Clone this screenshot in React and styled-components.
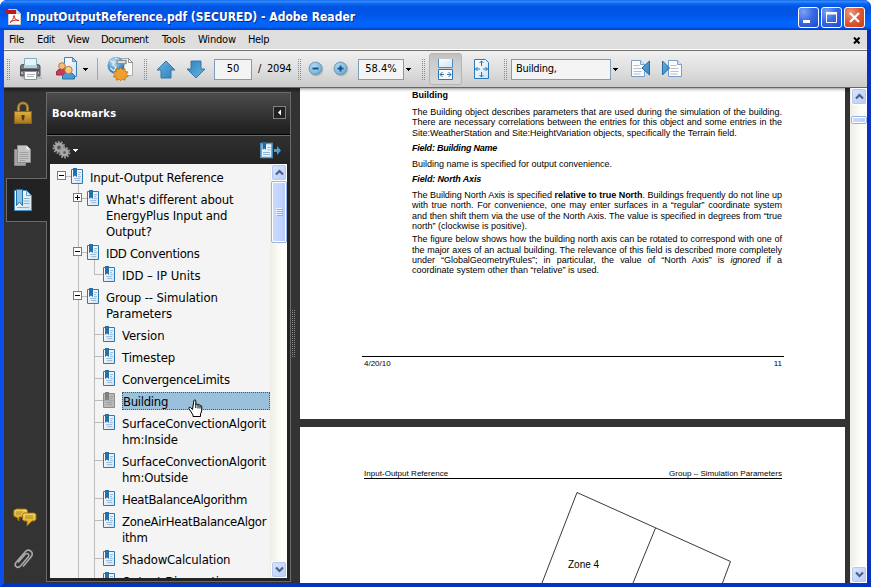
import React from "react";
import styled, { createGlobalStyle, css } from "styled-components";

const UI = '"DejaVu Sans Condensed", "DejaVu Sans", sans-serif';

const GlobalStyle = createGlobalStyle`
  * { box-sizing: border-box; }
  body { margin: 0; background: #fff; overflow: hidden; }
  svg { display: block; flex: none; }
`;

/* ---------- window frame ---------- */
const Window = styled.div`
  width: 871px;
  height: 587px;
  display: flex;
  flex-direction: column;
  overflow: hidden;
  border-radius: 7px 7px 0 0;
  background: #0831d9;
  font-family: ${UI};
  font-stretch: condensed;
  color: #000;
`;
const TitleBar = styled.header`
  height: 30px;
  flex: none;
  display: flex;
  align-items: center;
  padding: 4px 6px 0 6px;
  background: linear-gradient(#0058e0 0, #3a8cff 1px, #2a83f8 2px, #0763ee 4px, #0054e3 7px, #0055e5 15px, #0060f8 20px, #0066ff 25px, #0060f4 27px, #0046d0 29px, #0040c4 30px);
`;
const Title = styled.h1`
  margin: 0 auto 0 4px;
  font: bold 12px/16px "DejaVu Sans Condensed", "DejaVu Sans", sans-serif;
  font-stretch: condensed;
  letter-spacing: 0.01px;
  color: #fff;
  text-shadow: 1px 1px 0 #0a2a8c;
  white-space: pre;
`;
const WindowButton = styled.button`
  width: 21px;
  height: 21px;
  margin-left: 2px;
  padding: 0;
  border: 1px solid #fff;
  border-radius: 3px;
  background: ${(p) =>
    p.$close
      ? "radial-gradient(circle at 30% 25%, #ee9a7c 0, #e25a34 45%, #c83c14 100%)"
      : "radial-gradient(circle at 25% 20%, #7ba2f4 0, #3a6be6 45%, #1c48cc 100%)"};
`;
const Frame = styled.div`
  flex: 1;
  min-height: 0;
  display: flex;
  flex-direction: column;
  border: solid;
  border-width: 0 4px 4px;
  border-color: #0a48e0 #0831c0 #0434c4 #0a50e8;
  background: #333;
`;
const MenuBar = styled.nav`
  height: 21px;
  flex: none;
  display: flex;
  align-items: center;
  padding: 0 6px 0 5px;
  background: #dedede;
  border-bottom: 1px solid #707070;
  box-shadow: inset 0 -1px #fff;
`;
const MenuItem = styled.span`
  width: ${(p) => p.$w}px;
  font-size: 11px;
  line-height: 14px;
  letter-spacing: ${(p) => p.$ls}px;
  white-space: nowrap;
`;
const CloseDoc = styled.span`
  margin-left: auto;
`;

/* ---------- toolbar ---------- */
const ToolBar = styled.div`
  height: 37px;
  flex: none;
  display: flex;
  align-items: center;
  padding-left: 3px;
  background: linear-gradient(#f0f0f0, #dcdcdc 60%, #cacaca);
  border-bottom: 1px solid #666;
`;
const Tool = styled.span`
  width: ${(p) => p.$w}px;
  margin-left: ${(p) => p.$gap}px;
  flex: none;
  display: flex;
  justify-content: center;
`;
const Grip = styled.span`
  width: 4px;
  height: 21px;
  flex: none;
  margin-left: ${(p) => p.$gap || 0}px;
  background: radial-gradient(circle at 0.5px 0.5px, #8c8c8c 0.7px, transparent 0.8px) 0 0 / 2px 2px;
`;
const Divider = styled.span`
  width: 1px;
  height: 22px;
  margin-left: 9px;
  background: #aaa69a;
`;
const Field = styled.span`
  width: ${(p) => p.$w}px;
  height: 21px;
  flex: none;
  margin-left: ${(p) => p.$gap}px;
  padding: 0 ${(p) => p.$pad || 0}px;
  border: 1px solid #7f9db9;
  background: #f4f4f4;
  font-size: 11px;
  line-height: 18px;
  letter-spacing: ${(p) => p.$ls || 0}px;
  text-align: ${(p) => p.$align || "center"};
`;
const PageTotal = styled.span`
  width: 34px;
  margin-left: 6px;
  font-size: 11px;
  line-height: 18px;
  letter-spacing: -0.2px;
  white-space: pre;
`;
const PressedTool = styled.button`
  width: 33px;
  height: 32px;
  flex: none;
  margin-left: 3px;
  padding: 1px 0 0;
  display: flex;
  align-items: center;
  justify-content: center;
  border: 1px solid #b4b4b4;
  border-radius: 3px;
  background: linear-gradient(#c0c0c0, #cdcdcd 30%, #d8d8d8);
`;

/* ---------- navigation strip ---------- */
const Workspace = styled.div`
  flex: 1;
  min-height: 0;
  display: flex;
  background: linear-gradient(#1e1e1e, #333 5px);
`;
const Strip = styled.aside`
  width: 42px;
  flex: none;
  display: flex;
  flex-direction: column;
  z-index: 1;
`;
const StripButton = styled.button`
  height: ${(p) => p.$h}px;
  width: 41px;
  margin: ${(p) => p.$top || 0}px 0 0 2px;
  padding: 0 0 0 7px;
  display: flex;
  align-items: center;
  background: none;
  border: 0;
  ${(p) =>
    p.$active &&
    css`
      background: #222;
      border: 1px solid #6a6a6a;
      border-right: 0;
    `}
`;
const StripSpacer = styled.div`
  flex: 1;
`;

/* ---------- bookmarks panel ---------- */
const Panel = styled.section`
  width: 245px;
  flex: none;
  margin: 4px 0 1px;
  display: flex;
  flex-direction: column;
  border: 1px solid #6a6a6a;
  background: #242424;
`;
const PanelHead = styled.div`
  height: 42px;
  flex: none;
  display: flex;
  align-items: center;
  justify-content: space-between;
  padding: 0 4px 2px 5px;
  background: linear-gradient(#4c4c4c, #222 90%);
  border-bottom: 1px solid #000;
`;
const PanelTitle = styled.h2`
  margin: 2px 0 0;
  font-size: 11px;
  line-height: 14px;
  font-weight: bold;
  letter-spacing: 0.25px;
  color: #fff;
`;
const CollapseButton = styled.button`
  width: 13px;
  height: 13px;
  padding: 0;
  border: 1px solid #808080;
  background: #222;
`;
const PanelTools = styled.div`
  height: 29px;
  flex: none;
  display: flex;
  align-items: center;
  padding: 0 9px 0 5px;
  border-top: 1px solid #6a6a6a;
  background: linear-gradient(#303030, #242424);
`;
const PanelBody = styled.div`
  flex: 1;
  min-height: 0;
  margin: 0 3px 3px;
  display: flex;
  background: #f4f4f4;
`;
const Tree = styled.div`
  flex: 1;
  min-width: 0;
  padding-top: 2px;
  overflow: hidden;
`;
const line = (x, y, h) => `linear-gradient(#bbb, #bbb) ${x}px ${y} / 1px ${h} no-repeat`;
const guides = (p) => {
  const g = [];
  if (p.$depth === 0) g.push(line(28, "18px", "100%"));
  else g.push(line(28, "0", "100%"));
  if (p.$depth === 1 && p.$open) g.push(line(44, "18px", "100%"));
  if (p.$depth === 2) g.push(line(44, "0", p.$last ? "11px" : "100%"));
  return g.join(",");
};
const Row = styled.div`
  display: flex;
  align-items: flex-start;
  padding: 2px 0 2px ${(p) => [7, 23, 44][p.$depth]}px;
  background: ${guides};
`;
const Toggle = styled.span`
  width: 9px;
  height: 9px;
  flex: none;
  margin-top: 3px;
  border: 1px solid #7a7a7a;
  background: ${(p) => (p.$open ? "" : "linear-gradient(#000, #000) 3px 1px / 1px 5px no-repeat,")}
    linear-gradient(#000, #000) 1px 3px / 5px 1px no-repeat, #fff;
`;
const Stem = styled.span`
  width: ${(p) => p.$w}px;
  height: 1px;
  flex: none;
  margin-top: 8px;
  background: #bbb;
`;
const Label = styled.span`
  flex: 1;
  min-width: 0;
  margin-left: 7px;
  padding: 1px 0 0;
  border: 1px solid transparent;
  border-width: 1px 0;
  margin-bottom: -1px;
  font-size: 13px;
  line-height: 16px;
  letter-spacing: ${(p) => p.$ls}px;
  white-space: pre;
  ${(p) =>
    p.$selected &&
    css`
      height: 18px;
      margin-bottom: 0;
      border: 1px dotted #7a4a30;
      background: #9ac0dc;
    `}
`;

/* ---------- scroll bars ---------- */
const ScrollBar = styled.div`
  width: 17px;
  flex: none;
  display: flex;
  flex-direction: column;
  background: linear-gradient(90deg, #eeede5, #fdfdf8 60%, #fefefb);
`;
const ScrollButton = styled.button`
  width: 16px;
  height: 17px;
  flex: none;
  margin: ${(p) => (p.$end ? "auto 0 0 1px" : "0 0 0 1px")};
  padding: 0;
  display: flex;
  align-items: center;
  justify-content: center;
  border: 1px solid #fff;
  outline: 1px solid #b4c8f0;
  outline-offset: -2px;
  border-radius: 3px;
  background: linear-gradient(135deg, #dbe6fe, #b9cbf8);
`;
const Thumb = styled.div`
  width: 16px;
  height: ${(p) => p.$h}px;
  flex: none;
  margin: ${(p) => p.$top || 0}px 0 0 1px;
  display: flex;
  align-items: center;
  justify-content: center;
  border: 1px solid #98b0e4;
  border-radius: 2px;
  box-shadow: inset 0 0 0 1px #fff;
  background: linear-gradient(90deg, #cbdafe, #c2d3fd 60%, #b4c8f8);
`;

/* ---------- document view ---------- */
const Splitter = styled.div`
  width: 9px;
  flex: none;
  padding: 222px 0 0 1px;
`;
const SplitGrip = styled.div`
  width: 4px;
  height: 48px;
  background: radial-gradient(circle at 0.5px 0.5px, #8a8a8a 0.7px, transparent 0.8px) 0 0 / 2px 2px;
`;
const Pages = styled.main`
  width: 545px;
  flex: none;
  margin-right: 5px;
  display: flex;
  flex-direction: column;
  gap: 8px;
  overflow: hidden;
  font-family: "Liberation Sans", Arial, sans-serif;
`;
const Page = styled.article`
  height: ${(p) => p.$h}px;
  flex: none;
  background: ${(p) => (p.$first ? "linear-gradient(#a8a8a8, #e4e4e4 2px, #fff 4px)" : "#fff")};
  display: flex;
  flex-direction: column;
`;
const Body = styled.div`
  width: 370px;
  height: 268px;
  margin-left: 112px;
  font-size: 9px;
`;
const Heading = styled.h3`
  margin: ${(p) => p.$top}px 0 0;
  height: 10px;
  font-size: 9px;
  line-height: 10px;
  font-style: ${(p) => (p.$italic ? "italic" : "normal")};
  letter-spacing: ${(p) => p.$ls || 0}px;
`;
const Paragraph = styled.p`
  margin: ${(p) => p.$top}px 0 0;
`;
const Line = styled.span`
  display: block;
  height: 10.3px;
  line-height: 10.3px;
  white-space: nowrap;
  letter-spacing: ${(p) => (p.$end ? 0 : -0.03)}px;
  text-align: left;
  text-align-last: ${(p) => (p.$end ? "left" : "justify")};
`;
const Footer = styled.div`
  width: 422px;
  margin-left: 62px;
  padding: 2px 2px 0 2px;
  display: flex;
  justify-content: space-between;
  border-top: 1px solid #000;
  font-size: 8px;
  line-height: 10px;
`;
const RunningHead = styled.div`
  width: 418px;
  margin: 42px 0 0 64px;
  display: flex;
  justify-content: space-between;
  border-bottom: 1px solid #000;
  font-size: 8px;
  line-height: 9px;
  letter-spacing: 0.03px;
`;

/* ---------- icons ---------- */
const Caret = ({ fill = "#000" }) => (
  <svg width="5" height="3" shapeRendering="crispEdges"><path d="M0 0h5L2.5 3z" fill={fill} /></svg>
);
const PdfIcon = () => (
  <svg width="16" height="16" viewBox="0 0 16 16">
    <path d="M2.5.5h8l4 4v11h-12z" fill="#fff" stroke="#ccc" />
    <path d="M10.5.5v4h4z" fill="#ddd" stroke="#aaa" strokeWidth=".6" />
    <path d="M0 1h10v4H0z" fill="#c4161c" />
    <path d="M4 13.5C6 12 8 9 8 6.5c0 3 2 5 5 5-3-1-7 0-9 2z" fill="none" stroke="#d42020" />
  </svg>
);
const MinimizeGlyph = () => <svg width="19" height="19"><path d="M4 12h7v3H4z" fill="#fff" /></svg>;
const MaximizeGlyph = () => (
  <svg width="19" height="19"><path d="M4.500 5.500h10v9h-10z" fill="none" stroke="#fff" /><path d="M4 4h11v2.500H4z" fill="#fff" /></svg>
);
const CloseGlyph = () => <svg width="19" height="19"><path d="M5 5l9 9M14 5l-9 9" stroke="#fff" strokeWidth="2.200" /></svg>;
const DocCloseGlyph = () => <svg width="8" height="7"><path d="M1 .5l5.500 6M6.500 .5L1 6.500" stroke="#000" strokeWidth="2" /></svg>;

const Defs = () => (
  <svg width="0" height="0">
    <defs>
      <linearGradient id="blue" x1="0" y1="0" x2="1" y2="1"><stop offset="0" stopColor="#7cc0e8" /><stop offset="1" stopColor="#1a6ca8" /></linearGradient>
      <linearGradient id="arrow" x1="0" y1="0" x2="1" y2="1"><stop offset="0" stopColor="#6cb4e0" /><stop offset="1" stopColor="#2c80bc" /></linearGradient>
      <linearGradient id="paper" x1="0" y1="0" x2="1" y2="1"><stop offset="0" stopColor="#fff" /><stop offset="1" stopColor="#cfe2f2" /></linearGradient>
      <linearGradient id="gold" x1="0" y1="0" x2="0" y2="1"><stop offset="0" stopColor="#e0b040" /><stop offset="1" stopColor="#a8741c" /></linearGradient>
      <linearGradient id="note" x1="0" y1="0" x2="0" y2="1"><stop offset="0" stopColor="#f4d860" /><stop offset="1" stopColor="#d8a41c" /></linearGradient>
      <radialGradient id="globe" cx=".4" cy=".3" r=".8"><stop offset="0" stopColor="#d0e8f8" /><stop offset=".5" stopColor="#5a9cd0" /><stop offset="1" stopColor="#1c5c98" /></radialGradient>
      <radialGradient id="knob" cx=".4" cy=".35" r=".7"><stop offset="0" stopColor="#b4dcf4" /><stop offset=".7" stopColor="#80b8dc" /><stop offset="1" stopColor="#5a90b8" /></radialGradient>
    </defs>
  </svg>
);
const PrinterIcon = () => (
  <svg width="24" height="24" viewBox="0 0 24 24">
    <path d="M3 20h20v2H3z" fill="#000" opacity=".12" />
    <path d="M1.500 9.500q0-2 2-2h15q2.500 0 2.500 2V19h-19.500z" fill="#74787c" stroke="#505458" />
    <path d="M5.500 1.500h12v8h-12z" fill="#eaf4f8" stroke="#7cb0c4" />
    <path d="M5 8h13v3H5z" fill="#b0d4e0" />
    <path d="M2 12h18v2H2z" fill="#484a4c" />
    <path d="M2 15h2v2H2zM19 15h1v2h-1z" fill="#b0b4b8" />
    <path d="M5.500 14.500h12v8h-12z" fill="#fcfcfc" stroke="#8c9298" />
    <path d="M8 17.500h8M8 19.500h7" stroke="#a8b4bc" />
  </svg>
);
const CollaborateIcon = () => (
  <svg width="23" height="24" viewBox="0 0 23 24">
    <path d="M8.500.5h8l4 4v15h-12z" fill="url(#paper)" stroke="#3c80b8" />
    <path d="M16.500.5v4h4z" fill="#9cc4e0" stroke="#3c80b8" strokeWidth=".8" />
    <path d="M.5 18v-3.500l2-2h6l2 2V18z" fill="#c43c58" stroke="#a02c48" />
    <circle cx="6" cy="9" r="3.300" fill="#f4bc80" stroke="#b87838" />
    <path d="M6.500 22v-3.500l2.500-2.500h7l2.500 2.500V22z" fill="#4c98d0" stroke="#2c70a8" />
    <circle cx="12.500" cy="13" r="3.700" fill="#fcca88" stroke="#bc7c38" />
  </svg>
);
const GlobeIcon = () => (
  <svg width="27" height="26" viewBox="0 0 27 26">
    <path d="M10.500 3.500V2.500h11l4 4v13h-8z" fill="#f8f8f8" stroke="#aaa" />
    <circle cx="9" cy="9.500" r="8.500" fill="url(#globe)" />
    <path d="M3 5c3 0 4 2 3 4l3 2-2 4-4-3M8 2l4 2" fill="none" stroke="#dcecf4" strokeWidth="1.300" />
    <path d="M10 4.500h9v3h-9z" fill="#f4f4f4" stroke="#8e9294" strokeWidth="1.400" />
    <path d="M21.500 2.500v4h4z" fill="#fff" stroke="#777" strokeWidth=".8" />
    <path d="M13 12l1.600 2.300 2.700-.9.200 2.900 2.900.4-1.500 2.500 1.500 2.300-2.900.6-.2 2.900-2.700-1.100L13 25.600l-1.700-1.700-2.600 1.100-.3-2.900-2.800-.6 1.500-2.300-1.500-2.500 2.800-.4.300-2.900 2.600.9z" transform="translate(.7 -.8)" fill="#f0a030" stroke="#b8700c" strokeWidth=".8" />
  </svg>
);
const ArrowIcon = ({ down }) => (
  <svg width="22" height="21" viewBox="0 0 22 21">
    <g transform={down ? "rotate(180 11 10.500)" : undefined}>
      <path d="M11 2l9 9h-4v8H6v-8H2z" fill="url(#arrow)" stroke="#3478ac" strokeLinejoin="round" />
    </g>
  </svg>
);
const ZoomIcon = ({ plus }) => (
  <svg width="16" height="16" viewBox="0 0 16 16">
    <circle cx="8.500" cy="8.500" r="7" fill="#aaa" opacity=".5" />
    <circle cx="7.500" cy="7.500" r="6.500" fill="url(#knob)" stroke="#7c9cb4" />
    <path d={plus ? "M4.500 6.500h2v-2h2v2h2v2h-2v2h-2v-2h-2z" : "M4.500 6.500h6v2h-6z"} fill="#0c5490" />
  </svg>
);
const FitWidthIcon = () => (
  <svg width="17" height="21" viewBox="0 0 17 21">
    <path d="M1.500 0v8.500h14V0" fill="url(#paper)" stroke="#4c8cc0" />
    <path d="M1.500 20.500v-10h14v10z" fill="#f8fcff" stroke="#2c78b4" />
    <path d="M3 15.500h4M10 15.500h4M5.500 13L3 15.500 5.500 18M11.500 13l2.500 2.500-2.500 2.500" fill="none" stroke="#2c70a8" />
  </svg>
);
const FitPageIcon = () => (
  <svg width="17" height="21" viewBox="0 0 17 21">
    <path d="M1.500.5h11l3 3v16h-14z" fill="url(#paper)" stroke="#2c78b4" />
    <path d="M8.500 2v5M8.500 13v5M2.500 10h4.500M10 10h4.500M6.500 4l2-2 2 2M6.500 16l2 2 2-2M4.500 8l-2 2 2 2M12.500 8l2 2-2 2" fill="none" stroke="#2474b0" />
  </svg>
);
const JumpIcon = ({ next }) => (
  <svg width="22" height="20" viewBox="0 0 22 20">
    <g transform={next ? "translate(5 0)" : undefined}>
      <path d="M1.500 1.500h9l4 4v12h-13z" fill="#fafcff" stroke="#7c9ccc" />
      <path d="M10.500 1.500v4h4" fill="#dce8f4" stroke="#7c9ccc" />
      <path d="M3.500 6.500h6M3.500 9.500h8M3.500 12.500h8M3.500 15h7" stroke="#b8c0c8" />
    </g>
    <path d={next ? "M.5 2v14L7.500 9z" : "M19.500 2v14L12 9z"} fill="url(#arrow)" stroke="#246ca4" />
  </svg>
);
const LockIcon = () => (
  <svg width="20" height="24" viewBox="0 0 20 24">
    <path d="M5.500 11V6.500a4.500 4.500 0 019 0V11" fill="none" stroke="#8c6c2c" strokeWidth="3.200" />
    <path d="M5.500 11V6.500a4.500 4.500 0 019 0V11" fill="none" stroke="#c49c4c" strokeWidth="1.200" />
    <path d="M1.500 10.500h17v12h-17z" fill="url(#gold)" stroke="#8c641c" />
    <path d="M8.500 14h3v2.500l-1 3h-1l-1-3z" fill="#4c3c1c" />
  </svg>
);
const PagesIcon = () => (
  <svg width="20" height="23" viewBox="0 0 20 23">
    <path d="M1.500 5.500h11v16h-11z" fill="#a4a4a4" stroke="#888" />
    <path d="M4.500 1.500h9l4 4v13h-13z" fill="#c4c4c4" stroke="#8c8c8c" />
    <path d="M13.500 1.500v4h4z" fill="#eee" />
    <path d="M6.500 8.500h9M6.500 10.500h9M6.500 12.500h9M6.500 14.500h9M6.500 16.500h6" stroke="#999" strokeWidth=".8" />
  </svg>
);
const BookmarkTabIcon = () => (
  <svg width="19" height="23" viewBox="0 0 19 23">
    <path d="M.5 1.500h12l5 5v15H.5z" fill="url(#paper)" stroke="#4c90c4" />
    <path d="M12.500 1.500v5h5z" fill="#d4e8f4" stroke="#4c90c4" strokeWidth=".8" />
    <path d="M9.500 9.500h6M9.500 12h6M9.500 14.500h6M3 18.500h12" stroke="#88b0cc" />
    <path d="M2.500.5h6v16l-3-3.500-3 3.500z" fill="#8cc4e4" stroke="#2474ac" />
  </svg>
);
const CommentsIcon = () => (
  <svg width="24" height="19" viewBox="0 0 24 19">
    <path d="M3 1h10l1.500 1.500v5L13 9H6v4L3.500 9H2L.8 7.500v-5z" fill="url(#note)" stroke="#9c6c10" />
    <path d="M11 5h10.500L23 6.500v5L21.500 13H19l-5 5v-5h-3l-1.500-1.500v-5z" fill="url(#note)" stroke="#9c6c10" />
    <path d="M12 8h8M12 10h8M3 4h7M3 6h5" stroke="#9c741c" strokeWidth=".8" />
  </svg>
);
const ClipIcon = () => (
  <svg width="21" height="23" viewBox="0 0 21 23">
    <path d="M5 14.500l7-8c2-2.300 5 0 3.200 2.400L7.500 18c-2.800 3-7 0-4.500-3.500L12 4c3.800-4.200 9.500.5 6 5l-8 9.500" fill="none" stroke="#a8a8a8" strokeWidth="1.600" />
  </svg>
);
const Gear = ({ x, y, r }) => (
  <g transform={`translate(${x} ${y})`}>
    <circle r={r} fill="none" stroke="#989898" strokeWidth="2.400" strokeDasharray="1.700 1.200" />
    <circle r={r - 2} fill="#555" stroke="#a6a6a6" strokeWidth="2.800" />
  </g>
);
const GearsIcon = () => (
  <svg width="19" height="18" viewBox="0 0 19 18">
    <Gear x={7} y={6.500} r={5.300} />
    <Gear x={12.500} y={11.500} r={4.700} />
  </svg>
);
const NewBookmarkIcon = () => (
  <svg width="21" height="17" viewBox="0 0 21 17">
    <path d="M1 1.500h11v14H1z" fill="#eaf4fc" stroke="#4ca0d4" strokeWidth="1.600" />
    <path d="M7.500 5.500h3M7.500 8h3M3 10.500h7M3 12.500h7" stroke="#8ab4d4" />
    <path d="M2.500 0H6v8L4.200 6.500 2.500 8z" fill="#1a6ca8" />
    <path d="M14 7h3V4l4 4.500-4 4.500v-3h-3z" fill="#4c9ccc" />
  </svg>
);
const BookmarkIcon = ({ gray }) => (
  <svg width="12" height="16" viewBox="0 0 12 16">
    <path d="M.5 1.500h11v14H.5z" fill={gray ? "#b8b8b8" : "url(#paper)"} stroke={gray ? "#8c8c8c" : "#2c7cb4"} />
    <path d="M7 4.500h3M7 6.500h2M7 8.500h3M3 10.500h6M4 12.500h5" stroke={gray ? "#a0a0a0" : "#a4bcdc"} />
    <path d="M2 0h4v9L4 7.500 2 9z" fill={gray ? "#808080" : "#2470a8"} />
  </svg>
);
const Chevron = ({ down }) => (
  <svg width="9" height="7"><path d={down ? "M1 1.500l3.500 3.500L8 1.500" : "M1 5.500L4.500 2 8 5.500"} fill="none" stroke="#4d6185" strokeWidth="2.200" /></svg>
);
const ThumbLines = () => (
  <svg width="7" height="8"><path d="M0 .5h6M0 2.500h6M0 4.500h6M0 6.500h6" stroke="#eef4fe" /><path d="M1 1.500h6M1 3.500h6M1 5.500h6M1 7.500h6" stroke="#8caaf0" /></svg>
);
/* The hand pointer hovers over the selected bookmark. */
const Pointer = styled.svg`
  position: absolute;
  left: 188px;
  top: 399px;
  z-index: 2;
`;
const HandPointer = () => (
  <Pointer width="15" height="18" viewBox="0 0 15 18">
    <path d="M4.500 10.500L2.500 8.500c-1-.8-2.200.2-1.500 1.200L5 16v1.500h7.500V15l1.200-3V7.500c0-1.300-1.700-1.300-1.700 0V6.500c0-1.300-2-1.300-2 0V6c0-1.300-2.200-1.300-2.200 0V2c0-1.500-2-1.500-2 0z" fill="#fff" stroke="#000" />
    <path d="M7.800 6v3M10 6.500v3M12 7.500v2" stroke="#000" />
  </Pointer>
);
const ZoneDrawing = () => (
  <svg width="545" height="108" viewBox="300 479 545 108">
    <path d="M542 583L577 492.500 730.500 561.500 722.500 583M655.500 528L633 583" fill="none" stroke="#222" strokeWidth=".9" />
    <text x="568" y="568" fontSize="10">Zone 4</text>
  </svg>
);

/* ---------- content ---------- */
const menus = [
  ["File", 28, -0.35],
  ["Edit", 30, -0.35],
  ["View", 34, -0.3],
  ["Document", 61, -0.5],
  ["Tools", 36, -0.2],
  ["Window", 50, -0.2],
  ["Help", 24, -0.35],
];
const bookmarks = [
  { depth: 0, open: true, ls: -0.2, text: "Input-Output Reference" },
  { depth: 1, open: false, ls: -0.16, text: "What's different about\nEnergyPlus Input and\nOutput?" },
  { depth: 1, open: true, ls: -0.3, text: "IDD Conventions" },
  { depth: 2, last: true, ls: -0.02, text: "IDD – IP Units" },
  { depth: 1, open: true, ls: -0.1, text: "Group -- Simulation\nParameters" },
  { depth: 2, ls: -0.05, text: "Version" },
  { depth: 2, ls: -0.1, text: "Timestep" },
  { depth: 2, ls: -0.26, text: "ConvergenceLimits" },
  { depth: 2, ls: -0.3, text: "Building", selected: true },
  { depth: 2, ls: -0.2, text: "SurfaceConvectionAlgorit\nhm:Inside" },
  { depth: 2, ls: -0.2, text: "SurfaceConvectionAlgorit\nhm:Outside" },
  { depth: 2, ls: -0.33, text: "HeatBalanceAlgorithm" },
  { depth: 2, ls: -0.29, text: "ZoneAirHeatBalanceAlgor\nithm" },
  { depth: 2, ls: -0.18, text: "ShadowCalculation" },
  { depth: 2, ls: -0.2, text: "Output:Diagnostics" },
];

export default function App() {
  return (
    <Window>
      <GlobalStyle />
      <TitleBar>
        <PdfIcon />
        <Title>InputOutputReference.pdf (SECURED) - Adobe Reader</Title>
        <WindowButton aria-label="Minimize"><MinimizeGlyph /></WindowButton>
        <WindowButton aria-label="Maximize"><MaximizeGlyph /></WindowButton>
        <WindowButton $close aria-label="Close"><CloseGlyph /></WindowButton>
      </TitleBar>
      <Frame>
        <MenuBar>
          {menus.map(([name, w, ls]) => <MenuItem key={name} $w={w} $ls={ls}>{name}</MenuItem>)}
          <CloseDoc><DocCloseGlyph /></CloseDoc>
        </MenuBar>
        <ToolBar>
          <Grip />
          <Tool $gap={8} $w={24}><PrinterIcon /></Tool>
          <Tool $gap={13} $w={23}><CollaborateIcon /></Tool>
          <Tool $gap={4} $w={5}><Caret /></Tool>
          <Divider />
          <Tool $gap={9} $w={27}><GlobeIcon /></Tool>
          <Grip $gap={10} />
          <Tool $gap={7} $w={22}><ArrowIcon /></Tool>
          <Tool $gap={8} $w={22}><ArrowIcon down /></Tool>
          <Field $gap={7} $w={38}>50</Field>
          <PageTotal>/  2094</PageTotal>
          <Grip $gap={6} />
          <Tool $gap={6} $w={16}><ZoomIcon /></Tool>
          <Tool $gap={9} $w={16}><ZoomIcon plus /></Tool>
          <Field $gap={9} $w={46}>58.4%</Field>
          <Tool $gap={2} $w={5}><Caret /></Tool>
          <Grip $gap={11} />
          <PressedTool aria-label="Fit width"><FitWidthIcon /></PressedTool>
          <Tool $gap={11} $w={17}><FitPageIcon /></Tool>
          <Grip $gap={14} />
          <Field $gap={3} $w={100} $pad={4} $align="left" $ls={-0.3}>Building,</Field>
          <Tool $gap={2} $w={5}><Caret /></Tool>
          <Tool $gap={12} $w={22}><JumpIcon /></Tool>
          <Tool $gap={10} $w={22}><JumpIcon next /></Tool>
        </ToolBar>
        <Workspace>
          <Strip>
            <StripButton $h={24} $top={13} aria-label="Security"><LockIcon /></StripButton>
            <StripButton $h={23} $top={19} aria-label="Pages"><PagesIcon /></StripButton>
            <StripButton $h={44} $top={11} $active aria-label="Bookmarks"><BookmarkTabIcon /></StripButton>
            <StripSpacer />
            <StripButton $h={19} aria-label="Comments"><CommentsIcon /></StripButton>
            <StripButton $h={47} $top={9} aria-label="Attachments"><ClipIcon /></StripButton>
          </Strip>
          <Panel>
            <PanelHead>
              <PanelTitle>Bookmarks</PanelTitle>
              <CollapseButton aria-label="Collapse">
                <svg width="11" height="11"><path d="M7 2.500v6L4 5.500z" fill="#fff" /></svg>
              </CollapseButton>
            </PanelHead>
            <PanelTools>
              <GearsIcon />
              <Tool $gap={2} $w={5}><Caret fill="#fff" /></Tool>
              <CloseDoc><NewBookmarkIcon /></CloseDoc>
            </PanelTools>
            <PanelBody>
              <Tree>
                {bookmarks.map((b) => (
                  <Row key={b.text} $depth={b.depth} $open={b.open} $last={b.last}>
                    {b.depth < 2 && <Toggle $open={b.open} />}
                    <Stem $w={b.depth < 2 ? 5 : 9} />
                    <BookmarkIcon gray={b.selected} />
                    <Label $selected={b.selected} $ls={b.ls}>{b.text}</Label>
                  </Row>
                ))}
              </Tree>
              <ScrollBar>
                <ScrollButton aria-label="Up"><Chevron /></ScrollButton>
                <Thumb $h={62}><ThumbLines /></Thumb>
                <ScrollButton $end aria-label="Down"><Chevron down /></ScrollButton>
              </ScrollBar>
            </PanelBody>
          </Panel>
          <Splitter><SplitGrip /></Splitter>
          <Pages>
            <Page $h={331} $first>
              <Body>
                <Heading $top={2}>Building</Heading>
                <Paragraph $top={7}>
                  <Line>The Building object describes parameters that are used during the simulation of the building.</Line>
                  <Line>There are necessary correlations between the entries for this object and some entries in the</Line>
                  <Line $end>Site:WeatherStation and Site:HeightVariation objects, specifically the Terrain field.</Line>
                </Paragraph>
                <Heading $top={5} $italic $ls={-0.22}>Field: Building Name</Heading>
                <Paragraph $top={6}>
                  <Line $end>Building name is specified for output convenience.</Line>
                </Paragraph>
                <Heading $top={5} $italic $ls={-0.15}>Field: North Axis</Heading>
                <Paragraph $top={6}>
                  <Line>The Building North Axis is specified <b>relative to true North</b>. Buildings frequently do not line up</Line>
                  <Line>with true north. For convenience, one may enter surfaces in a “regular” coordinate system</Line>
                  <Line>and then shift them via the use of the North Axis. The value is specified in degrees from “true</Line>
                  <Line $end>north” (clockwise is positive).</Line>
                </Paragraph>
                <Paragraph $top={3}>
                  <Line>The figure below shows how the building north axis can be rotated to correspond with one of</Line>
                  <Line>the major axes of an actual building. The relevance of this field is described more completely</Line>
                  <Line>under “GlobalGeometryRules”; in particular, the value of “North Axis” is <i>ignored</i> if a</Line>
                  <Line $end>coordinate system other than “relative” is used.</Line>
                </Paragraph>
              </Body>
              <Footer><span>4/20/10</span><span>11</span></Footer>
            </Page>
            <Page $h={156}>
              <RunningHead><span>Input-Output Reference</span><span>Group – Simulation Parameters</span></RunningHead>
              <ZoneDrawing />
            </Page>
          </Pages>
          <ScrollBar>
            <ScrollButton aria-label="Up"><Chevron /></ScrollButton>
            <Thumb $h={8} $top={11} />
            <ScrollButton $end aria-label="Down"><Chevron down /></ScrollButton>
          </ScrollBar>
        </Workspace>
      </Frame>
      <HandPointer />
      <Defs />
    </Window>
  );
}
